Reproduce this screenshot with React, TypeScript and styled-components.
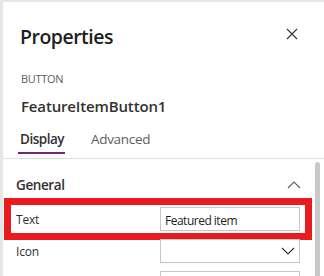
import React from "react";
import styled, { createGlobalStyle } from "styled-components";

const GlobalStyle = createGlobalStyle`
  html, body {
    margin: 0;
    padding: 0;
    background: #e6e6e6;
    overflow: hidden;
  }
  body {
    font-family: "Open Sans", "Noto Sans", sans-serif;
    color: #323130;
  }
`;

export default function App() {
  return (
    <>
      <GlobalStyle />
      <Panel>
        <Header>
          <Title>Properties</Title>
          <CloseBtn aria-label="Close">
            <svg width="16" height="16" viewBox="0 0 16 16">
              <path d="M3 3 L13 13 M13 3 L3 13" stroke="#323130" strokeWidth="1.1" fill="none" />
            </svg>
          </CloseBtn>
        </Header>
        <Kind>BUTTON</Kind>
        <ControlName>FeatureItemButton1</ControlName>
        <Tabs>
          <Tab active>Display</Tab>
          <Tab>Advanced</Tab>
        </Tabs>
        <Body>
          <Content>
            <SectionHead>
              <span>General</span>
              <svg width="14" height="8" viewBox="0 0 14 8">
                <path d="M1 7 L7 1 L13 7" stroke="#605e5c" strokeWidth="1.1" fill="none" />
              </svg>
            </SectionHead>
            <Rows>
              <Row highlighted>
                <Label>Text</Label>
                <Field>
                  <input defaultValue="Featured item" />
                </Field>
              </Row>
              <Row>
                <Label>Icon</Label>
                <Field>
                  <span />
                  <svg width="14" height="8" viewBox="0 0 14 8">
                    <path d="M1 1 L7 7 L13 1" stroke="#323130" strokeWidth="1.1" fill="none" />
                  </svg>
                </Field>
              </Row>
              <Row>
                <Label />
                <Field />
              </Row>
            </Rows>
          </Content>
          <ScrollTrack>
            <Thumb />
          </ScrollTrack>
        </Body>
      </Panel>
    </>
  );
}

const Panel = styled.aside`
  width: 321px;
  height: 274px;
  margin: 2px 0 0 3px;
  background: #ffffff;
  display: flex;
  flex-direction: column;
  overflow: hidden;
`;

const Header = styled.div`
  display: flex;
  justify-content: space-between;
  align-items: flex-start;
  padding: 21px 24px 0 17px;
`;

const Title = styled.h1`
  margin: 0;
  font-size: 19.5px;
  line-height: 28px;
  font-weight: 600;
  letter-spacing: -0.5px;
  color: #201f1e;
`;

const CloseBtn = styled.button`
  width: 16px;
  height: 16px;
  margin-top: 3px;
  padding: 0;
  border: none;
  background: transparent;
  display: flex;
`;

const Kind = styled.div`
  margin: 20px 0 0 18px;
  font-size: 11px;
  line-height: 16px;
  letter-spacing: -0.3px;
  color: #605e5c;
`;

const ControlName = styled.div`
  margin: 9px 0 0 18px;
  font-size: 15px;
  line-height: 20px;
  font-weight: 600;
  letter-spacing: -0.15px;
  color: #323130;
`;

const Tabs = styled.div`
  display: flex;
  gap: 24px;
  margin-top: 13px;
  padding: 0 0 4px 15px;
  border-bottom: 1px solid #e1dfdd;
`;

const Tab = styled.div<{ active?: boolean }>`
  padding: 0 1px 3px 2px;
  font-size: 13.5px;
  line-height: 20px;
  font-weight: ${(p) => (p.active ? 600 : 400)};
  letter-spacing: ${(p) => (p.active ? "-0.5px" : "-0.3px")};
  color: ${(p) => (p.active ? "#323130" : "#605e5c")};
  border-bottom: 2px solid ${(p) => (p.active ? "#742774" : "transparent")};
`;

const Body = styled.div`
  flex: 1;
  display: grid;
  grid-template-columns: 1fr 12px;
  min-height: 0;
`;

const Content = styled.div`
  padding: 16px 12px 0 13px;
`;

const SectionHead = styled.div`
  display: flex;
  justify-content: space-between;
  align-items: center;
  font-size: 13.5px;
  line-height: 20px;
  font-weight: 600;
  letter-spacing: -0.4px;
  color: #323130;

  svg {
    margin-right: -1px;
  }
`;

const Rows = styled.div`
  display: flex;
  flex-direction: column;
  gap: 8px;
  margin-top: 12px;
`;

const Row = styled.div<{ highlighted?: boolean }>`
  position: relative;
  display: grid;
  grid-template-columns: 144px 140px;
  align-items: center;
  height: 24px;

  &::after {
    content: "";
    display: ${(p) => (p.highlighted ? "block" : "none")};
    position: absolute;
    inset: -9px -12px -9px -12px;
    border: 7px solid #e81c1e;
    pointer-events: none;
  }
`;

const Label = styled.div`
  padding-top: 2px;
  font-size: 12px;
  line-height: 20px;
  letter-spacing: -0.2px;
  color: #323130;
`;

const Field = styled.div`
  box-sizing: border-box;
  height: 24px;
  border: 1px solid #c8c6c4;
  background: #fff;
  display: flex;
  align-items: center;
  justify-content: space-between;
  padding: 2px 4px 0 4px;

  input {
    border: none;
    outline: none;
    padding: 0;
    width: 100%;
    font: inherit;
    font-size: 12px;
    letter-spacing: -0.5px;
    color: #201f1e;
    background: transparent;
  }

  svg {
    margin-top: -2px;
  }
`;

const ScrollTrack = styled.div`
  padding: 3px 4px 0 3px;
`;

const Thumb = styled.div`
  height: 100%;
  width: 5px;
  border-radius: 3px 3px 0 0;
  background: #c8c8c8;
`;
